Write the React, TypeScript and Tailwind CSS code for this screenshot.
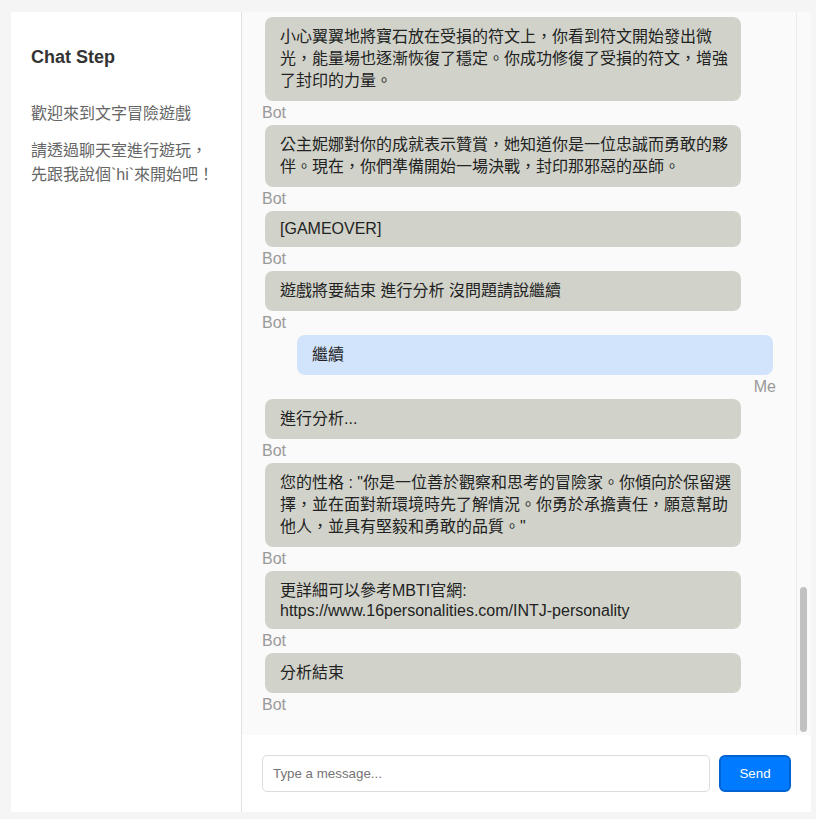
import React, { useLayoutEffect, useRef } from 'react';

type Msg = {
  from: 'bot' | 'me';
  text: string | string[];
};

// earlier part of the adventure, scrolled out of view
const history: Msg[] = [
  { from: 'me', text: 'hi' },
  { from: 'bot', text: '歡迎來到文字冒險遊戲！在這個遊戲中，你將扮演一位年輕的冒險者，踏上拯救王國的旅程。你的每一個選擇都會影響故事的發展。準備好了嗎？' },
  { from: 'me', text: '準備好了' },
  { from: 'bot', text: '你站在一座古老村莊的入口，遠方的山脈籠罩在濃霧之中。村長告訴你，邪惡的巫師正在破壞守護王國的封印，只有找到失落的寶石才能修復它。你要先前往森林，還是先到村莊裡打聽消息？' },
  { from: 'me', text: '先到村莊裡打聽消息' },
  { from: 'bot', text: '你走進村莊的酒館，裡面擠滿了旅人和商人。一位老獵人告訴你，最近森林深處常常出現奇怪的光芒，而且有人看到一位穿著銀色盔甲的少女在那裡徘徊。' },
  { from: 'me', text: '向老獵人詢問更多關於少女的事情' },
  { from: 'bot', text: '老獵人壓低聲音說：「她自稱是王國的公主妮娜，正在尋找被巫師奪走的寶石。不過森林裡有許多危險的生物，你最好帶上一些裝備再出發。」' },
  { from: 'me', text: '去商店購買裝備' },
  { from: 'bot', text: '你在商店買了一把短劍、一面木盾和幾瓶治療藥水。店主還免費送你一張破舊的地圖，上面標示著森林中一座廢棄神殿的位置。' },
  { from: 'me', text: '出發前往森林' },
  { from: 'bot', text: '森林裡光線昏暗，樹枝在風中沙沙作響。走了不久，你聽到前方傳來打鬥的聲音，一群哥布林正圍攻著一位身穿銀色盔甲的少女。你要怎麼做？' },
  { from: 'me', text: '拔出短劍衝上前幫助她' },
  { from: 'bot', text: '你舉起木盾擋下哥布林的攻擊，並用短劍將牠們一一擊退。少女向你道謝，她正是公主妮娜。她說寶石被藏在廢棄神殿的深處，希望你能和她一起前往。' },
  { from: 'me', text: '答應和公主一起前往神殿' },
  { from: 'bot', text: '你們依照地圖來到廢棄神殿。神殿的大門上刻滿了古老的符文，其中一塊符文已經碎裂，散發著微弱的紫色光芒。妮娜說這就是封印被破壞的地方。' },
  { from: 'me', text: '仔細觀察大門上的符文' },
  { from: 'bot', text: '你發現符文排列成一個圓形，只要按照正確的順序觸碰，就能打開大門。你回想起地圖背面畫著的星座圖案，似乎就是解開謎題的線索。' },
  { from: 'me', text: '按照星座圖案的順序觸碰符文' },
  { from: 'bot', text: '大門緩緩打開，一陣冰冷的風從神殿深處吹出。你們沿著階梯往下走，來到一間巨大的石室，中央的祭壇上放著一顆閃耀著藍光的寶石，旁邊卻守著一隻石像鬼。' },
  { from: 'me', text: '先觀察石像鬼的動作，再找機會拿寶石' },
  { from: 'bot', text: '你注意到石像鬼每隔一段時間就會轉身巡視。趁牠背對祭壇的瞬間，你悄悄地拿起寶石。石像鬼察覺到異狀，發出低沉的怒吼，但妮娜用魔法暫時困住了牠。' },
  { from: 'bot', text: '就在你準備離開時，石室的地面突然開始震動，天花板上的碎石紛紛落下。妮娜大喊：「是巫師的詛咒！我們必須在神殿崩塌前離開！」' },
  { from: 'me', text: '拉著妮娜沿著原路往外跑' },
  { from: 'bot', text: '你們在碎石之間穿梭，終於在最後一刻衝出了石室。回頭一看，通道已經被巨石完全封住。妮娜喘著氣說，寶石的力量可以修復大門上碎裂的符文。' },
  { from: 'me', text: '問妮娜要怎麼使用寶石的力量' },
  { from: 'bot', text: '妮娜說：「只要將寶石放在碎裂的符文上，並在心中默念守護的誓言，寶石就會回應你的意志。不過必須非常小心，如果寶石掉落，封印可能會完全崩壞。」' },
  { from: 'me', text: '我明白了，我會小心的' },
  { from: 'bot', text: '你深吸一口氣，握緊手中的寶石。寶石散發出溫暖的光芒，彷彿在回應你的決心。遠方傳來雷聲，天空逐漸被烏雲籠罩，巫師似乎已經察覺到你們的行動。' },
  { from: 'me', text: '帶著寶石回到大門修復符文' },
];

const recent: Msg[] = [
  {
    from: 'bot',
    text: [
      '小心翼翼地將寶石放在受損的符文上，你看到符文開始發出微',
      '光，能量場也逐漸恢復了穩定。你成功修復了受損的符文，增強',
      '了封印的力量。',
    ],
  },
  {
    from: 'bot',
    text: [
      '公主妮娜對你的成就表示贊賞，她知道你是一位忠誠而勇敢的夥',
      '伴。現在，你們準備開始一場決戰，封印那邪惡的巫師。',
    ],
  },
  { from: 'bot', text: ['[GAMEOVER]'] },
  { from: 'bot', text: ['遊戲將要結束 進行分析 沒問題請說繼續'] },
  { from: 'me', text: ['繼續'] },
  { from: 'bot', text: ['進行分析...'] },
  {
    from: 'bot',
    text: [
      '您的性格 : "你是一位善於觀察和思考的冒險家。你傾向於保留選',
      '擇，並在面對新環境時先了解情況。你勇於承擔責任，願意幫助',
      '他人，並具有堅毅和勇敢的品質。"',
    ],
  },
  {
    from: 'bot',
    text: ['更詳細可以參考MBTI官網:', 'https://www.16personalities.com/INTJ-personality'],
  },
  { from: 'bot', text: ['分析結束'] },
];

const hasCjk = (s: string) => /[\u3000-\u9fff\uff00-\uffef]/.test(s);

function Bubble({ msg }: { msg: Msg }) {
  const isMe = msg.from === 'me';
  return (
    <div className={`flex flex-col ${isMe ? 'items-end' : 'items-start'}`}>
      <div
        className={`m-[3px] w-[476px] rounded-[8px] px-[15px] py-[9px] text-[16px] text-[#222] ${
          isMe ? 'bg-[#d2e3fc]' : 'bg-[#d1d3ca]'
        }`}
      >
        {Array.isArray(msg.text) ? (
          msg.text.map((line, i) => (
            <div
              key={i}
              className={`whitespace-nowrap ${hasCjk(line) ? 'leading-[22px]' : 'leading-[18px]'}`}
            >
              {line}
            </div>
          ))
        ) : (
          <div className={hasCjk(msg.text) ? 'leading-[22px]' : 'leading-[18px]'}>{msg.text}</div>
        )}
      </div>
      <span className="text-[16px] leading-[18px] text-[#999]">{isMe ? 'Me' : 'Bot'}</span>
    </div>
  );
}

export default function App() {
  const listRef = useRef<HTMLDivElement>(null);

  useLayoutEffect(() => {
    const el = listRef.current;
    if (el) el.scrollTop = el.scrollHeight;
  }, []);

  return (
    <div className="min-h-screen bg-[#f5f5f5] pl-[11px] pt-[12px] font-['Liberation_Sans','Noto_Sans_CJK_TC',sans-serif]">
      <div className="flex h-[800px] w-[800px] bg-white">
        {/* Sidebar */}
        <div className="w-[231px] shrink-0 border-r border-[#e2e2e2] px-[20px] pt-[35px]">
          <h2 className="text-[18px] font-bold leading-[21px] text-[#333]">Chat Step</h2>
          <p className="mt-[34px] text-[16px] leading-[23px] text-[#666]">歡迎來到文字冒險遊戲</p>
          <p className="mt-[14px] text-[16px] leading-[23.5px] text-[#666]">
            請透過聊天室進行遊玩，
            <br />
            先跟我說個`hi`來開始吧！
          </p>
        </div>

        {/* Chat column */}
        <div className="flex min-w-0 flex-1 flex-col">
          <div className="flex min-h-0 flex-1 bg-[#fafafa]">
            <div
              ref={listRef}
              className="min-w-0 flex-1 overflow-y-auto px-[20px] pb-[21px] pt-[20px] [scrollbar-width:none]"
            >
              {[...history, ...recent].map((m, i) => (
                <Bubble key={i} msg={m} />
              ))}
            </div>
            {/* scrollbar track, list is pinned to the bottom */}
            <div className="flex w-[15px] shrink-0 flex-col justify-end border-l border-[#ebebeb] pb-[3px] pl-[3px]">
              <div className="h-[145px] w-[7px] rounded-full bg-[#c1c1c1]" />
            </div>
          </div>

          <div className="flex h-[77px] shrink-0 items-center gap-[9px] bg-white px-[20px]">
            <input
              type="text"
              placeholder="Type a message..."
              className="h-[37px] flex-1 rounded-[5px] border border-[#dcdcdc] bg-white px-[10px] text-[13.33px] text-[#222] outline-none placeholder:text-[#757575]"
            />
            <button className="h-[37px] w-[72px] rounded-[6px] border-2 border-[#0063d3] bg-[#007bff] text-[13.33px] text-white">
              Send
            </button>
          </div>
        </div>
      </div>
    </div>
  );
}
